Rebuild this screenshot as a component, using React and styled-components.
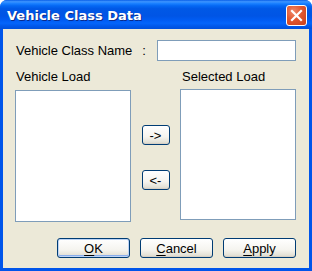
import React from "react";
import styled, { createGlobalStyle } from "styled-components";

const Global = createGlobalStyle`
  html, body { margin: 0; padding: 0; background: #ffffff; }
  * { box-sizing: border-box; }
`;

const Window = styled.div`
  width: 312px;
  height: 271px;
  display: flex;
  flex-direction: column;
  background: #0055ea;
  border-radius: 7px 7px 0 0;
  overflow: hidden;
  font-family: "Liberation Sans", Arial, sans-serif;
`;

const TitleBar = styled.div`
  height: 29px;
  flex: none;
  display: flex;
  align-items: center;
  justify-content: space-between;
  padding: 0 5px 0 7px;
  background: linear-gradient(
    to bottom,
    #0a5fe8 0%,
    #3d95ff 6%,
    #1a80ff 12%,
    #0468f4 20%,
    #0058e6 30%,
    #0055e5 55%,
    #005cf3 70%,
    #0465fb 80%,
    #0058ea 90%,
    #0050dc 100%
  );
`;

const Title = styled.span`
  font-family: "DejaVu Sans", Verdana, sans-serif;
  font-weight: bold;
  font-size: 13px;
  color: #ffffff;
  text-shadow: 1px 1px 0 #0a2a8a;
  padding-top: 1px;
`;

const CloseButton = styled.div`
  width: 21px;
  height: 21px;
  border: 1px solid #ffffff;
  border-radius: 3px;
  background: radial-gradient(circle at 35% 30%, #f08a6c 0%, #e2572f 45%, #c8401d 100%);
  display: flex;
  align-items: center;
  justify-content: center;
  margin-top: 2px;
`;

const Body = styled.div`
  flex: 1;
  margin: 0 3px 3px 3px;
  background: #ece9d8;
  padding: 11px 13px 0 12px;
  display: flex;
  flex-direction: column;
  font-size: 13px;
  color: #000000;
`;

const NameRow = styled.div`
  display: flex;
  align-items: center;
  height: 21px;
`;

const Label = styled.span`
  margin-left: ${(p) => p.$indent || 1}px;
  line-height: 15px;
  white-space: nowrap;
`;

const Colon = styled.span`
  margin-left: 10px;
`;

const TextInput = styled.input`
  margin-left: auto;
  width: 139px;
  height: 21px;
  border: 1px solid #7f9db9;
  background: #ffffff;
  padding: 0 3px;
  font: inherit;
  outline: none;
`;

const LabelRow = styled.div`
  display: flex;
  margin-top: 8px;
  height: 15px;
`;

const LeftLabelCell = styled.div`
  width: 165px;
`;

const ListsRow = styled.div`
  display: flex;
  margin-top: 6px;
  align-items: flex-start;
`;

const ListBox = styled.div`
  width: 116px;
  height: ${(p) => p.$h}px;
  margin-top: ${(p) => p.$dy || 0}px;
  background: #ffffff;
  border: 1px solid #7f9db9;
`;

const MiddleColumn = styled.div`
  width: 49px;
  display: flex;
  flex-direction: column;
  align-items: center;
  padding-top: 35px;
  gap: 25px;
`;

const Button = styled.button`
  width: ${(p) => p.$w}px;
  height: ${(p) => p.$h}px;
  padding: 0;
  border: 1px solid #003c74;
  border-radius: 3px;
  background: linear-gradient(to bottom, #ffffff 0%, #f5f4ef 60%, #e3e1d6 90%, #d6d0c5 100%);
  box-shadow: ${(p) =>
    p.$default
      ? "inset 0 0 0 1px #bcd3f5, inset 0 -1px 0 1px #89adeb"
      : "inset 0 -1px 0 0 #d6d0c5"};
  font-family: "Liberation Sans", Arial, sans-serif;
  font-size: 13px;
  color: #000000;
  line-height: 1;
  display: flex;
  align-items: center;
  justify-content: center;
  cursor: default;
`;

const Mnemonic = styled.span`
  text-decoration: underline;
  text-underline-offset: 2px;
`;

const ButtonRow = styled.div`
  display: flex;
  justify-content: flex-end;
  gap: 10px;
  margin-top: 16px;
`;

export default function App() {
  return (
    <>
      <Global />
      <Window>
        <TitleBar>
          <Title>Vehicle Class Data</Title>
          <CloseButton>
            <svg width="13" height="13" viewBox="0 0 13 13">
              <path d="M2 2 L11 11 M11 2 L2 11" stroke="#ffffff" strokeWidth="2.2" strokeLinecap="square" />
            </svg>
          </CloseButton>
        </TitleBar>
        <Body>
          <NameRow>
            <Label>Vehicle Class Name</Label>
            <Colon>:</Colon>
            <TextInput defaultValue="" />
          </NameRow>
          <LabelRow>
            <LeftLabelCell>
              <Label>Vehicle Load</Label>
            </LeftLabelCell>
            <Label $indent={2}>Selected Load</Label>
          </LabelRow>
          <ListsRow>
            <ListBox $h={132} />
            <MiddleColumn>
              <Button $w={28} $h={20}>-&gt;</Button>
              <Button $w={28} $h={20}>&lt;-</Button>
            </MiddleColumn>
            <ListBox $h={131} $dy={-1} />
          </ListsRow>
          <ButtonRow>
            <Button $w={73} $h={20} $default>
              <Mnemonic>O</Mnemonic>K
            </Button>
            <Button $w={73} $h={20}>
              <Mnemonic>C</Mnemonic>ancel
            </Button>
            <Button $w={73} $h={20}>
              <Mnemonic>A</Mnemonic>pply
            </Button>
          </ButtonRow>
        </Body>
      </Window>
    </>
  );
}
